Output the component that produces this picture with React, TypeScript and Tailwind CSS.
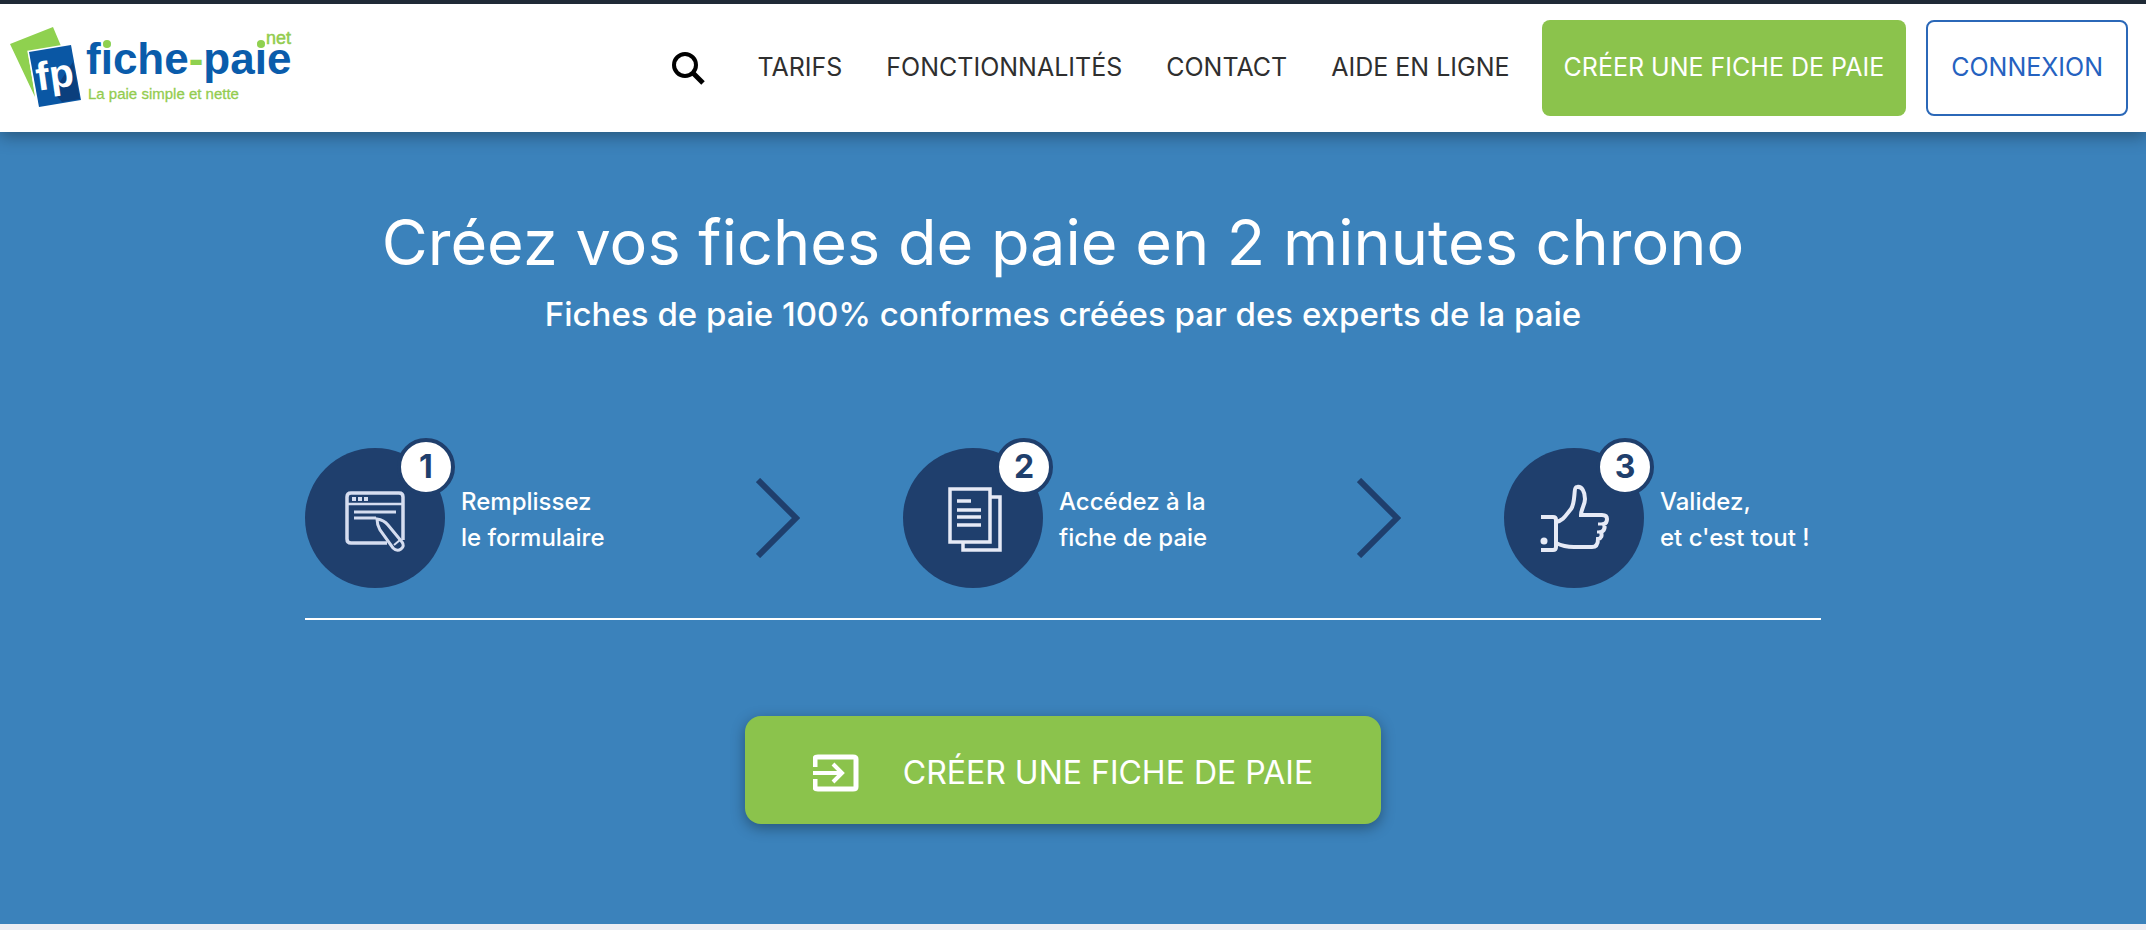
const links = ["TARIFS", "FONCTIONNALITÉS", "CONTACT", "AIDE EN LIGNE"];

function Logo() {
  return (
    <svg viewBox="0 0 320 128" className="h-32 w-80 shrink-0" role="img" aria-label="fiche-paie.net">
      <path d="M10 40 L53 23 L61 42 L28 48 L35 93 Z" fill="#8fd14f" />
      <path d="M29 48 L71 41 L81 96 L39 103 Z" fill="#0a57a4" stroke="#ffffff" strokeWidth="3" paintOrder="stroke" />
      <path d="M73 58 L80 95 L62 98 L53 88 Z" fill="#0b3f7d" />
      <g fontFamily="'Liberation Sans', Arial, sans-serif">
        <text x="36" y="84" fontSize="40" fontWeight="700" fill="#ffffff" transform="rotate(-8 56 72)">fp</text>
        <text x="86" y="70" fontSize="44" fontWeight="700" fill="#0a5cab">
          fiche<tspan fill="#8fd14f">-</tspan>paie
        </text>
        <circle cx="107" cy="40" r="4" fill="#8fd14f" />
        <circle cx="261" cy="40" r="4" fill="#8fd14f" />
        <text x="266" y="40" fontSize="18" fill="#93cc4f" stroke="#93cc4f" strokeWidth="0.5">net</text>
        <text x="88" y="95" fontSize="15" fill="#93cc4f" stroke="#93cc4f" strokeWidth="0.3">La paie simple et nette</text>
      </g>
    </svg>
  );
}

function SearchIcon() {
  return (
    <svg viewBox="0 0 34 34" className="size-[34px]" fill="none" stroke="#000000">
      <circle cx="14" cy="14" r="11" strokeWidth="4" />
      <path d="M21 21l11 11" strokeWidth="5" />
    </svg>
  );
}

function EnterIcon() {
  return (
    <svg viewBox="0 0 46 38" className="h-[38px] w-[46px]" fill="none" stroke="currentColor" strokeWidth="5">
      <path d="M2 13V5q0-2 3-2h35q3 0 3 2v28q0 2-3 2H5q-3 0-3-2v-8" />
      <path d="M0 19h29M20 10l9 9-9 9" strokeWidth="4" />
    </svg>
  );
}

function FormIcon() {
  return (
    <svg viewBox="0 0 140 140" className="size-full" fill="none" stroke="#d5ddf0" strokeWidth="3.5">
      <path d="M82 95H46q-4 0-4-4V49q0-4 4-4h48q4 0 4 4v43" />
      <path d="M42 56h56" strokeWidth="2.5" />
      <path d="M47 51h4M53 51h4M59 51h4" strokeWidth="4" />
      <path d="M49 64h42M49 70h22" strokeWidth="3" />
      <path d="M72 71q7 1 11 6l14 17q3 4-1 7t-8-1L75 82q-3-5-3-11z" fill="#1f3f6d" strokeWidth="3" />
      <path d="M89 97l6-5" strokeWidth="2" />
    </svg>
  );
}

function PagesIcon() {
  return (
    <svg viewBox="0 0 140 140" className="size-full" fill="none" stroke="#e6eaf6" strokeWidth="3.5">
      <path d="M47 41h40v53H47z" />
      <path d="M88 49h9v53H60v-7" />
      <path d="M54 53h14M54 62h24M54 69h24M54 77h24" strokeWidth="3.5" />
    </svg>
  );
}

function ThumbIcon() {
  return (
    <svg viewBox="0 0 140 140" className="size-full" fill="none" stroke="#e6eaf6" strokeWidth="4">
      <path d="M37 69h12q3 0 3 3v27q0 3-3 3H37" />
      <path d="M52 74c7-1 10-7 15-13 5-7 2-22 6-22 5-1 8 5 8 12 0 6-4 10-4 16h21q5 0 5 4t-3 5q2 6-3 8 2 6-3 7 0 8-6 8H70q-10 0-18-4" />
      <path d="M94 76h6M93 84h5M92 91h4" strokeWidth="3" />
      <circle cx="40" cy="93" r="3.5" fill="#e6eaf6" stroke="none" />
    </svg>
  );
}

function Chevron() {
  return (
    <svg viewBox="0 0 44 80" className="h-20 w-11" fill="none" stroke="#1f3f6d" strokeWidth="6">
      <path d="M2 2l38 38L2 78" />
    </svg>
  );
}

function Step({ n, icon, lines }: { n: number; icon: React.ReactNode; lines: string[] }) {
  return (
    <li className="flex items-center gap-4">
      <div className="relative size-[140px] shrink-0 rounded-full bg-[#1f3f6d]">
        {icon}
        <span className="absolute -top-[10px] -right-[10px] flex size-[58px] items-center justify-center rounded-full border-4 border-[#1f3f6d] bg-white text-[32px] font-bold text-[#1f3f6d]">
          {n}
        </span>
      </div>
      <p className="pt-1 text-2xl leading-9 font-medium whitespace-nowrap">
        {lines[0]}
        <br />
        {lines[1]}
      </p>
    </li>
  );
}

export default function App() {
  return (
    <div className="bg-[#eeeef3] pb-[6px] font-['Inter',sans-serif]">
      {/* HEADER */}
      <header className="relative flex h-[132px] items-center justify-between border-t-4 border-[#1f2a36] bg-white pr-[18px] shadow-[0_4px_16px_rgba(0,0,0,0.35)]">
        <a href="#">
          <Logo />
        </a>

        <div className="flex items-center text-[25px]">
          <button aria-label="Rechercher" className="mr-[52px]">
            <SearchIcon />
          </button>
          <nav className="mr-8 flex gap-11 text-[#2f2f2f]">
            {links.map((l) => (
              <a key={l} href="#">{l}</a>
            ))}
          </nav>
          <a href="#" className="mr-5 flex h-24 items-center rounded-lg bg-[#8bc34c] px-[22px] text-white">
            CRÉER UNE FICHE DE PAIE
          </a>
          <a href="#" className="flex h-24 items-center rounded-lg border-2 border-[#2b68b8] px-[23px] text-[#2562c0]">
            CONNEXION
          </a>
        </div>
      </header>

      {/* HERO */}
      <main className="flex h-[792px] flex-col items-center bg-[#3b82bb] pr-5 text-white">
        <h1 className="mt-[70px] text-[63px] leading-[80px]">Créez vos fiches de paie en 2 minutes chrono</h1>
        <p className="mt-2 text-[33px] leading-[48px] font-medium">
          Fiches de paie 100% conformes créées par des experts de la paie
        </p>

        {/* STEPS */}
        <ol className="mt-[110px] grid w-full max-w-[1516px] grid-cols-[451fr_147fr_454fr_147fr_317fr] items-center border-b-2 border-white pb-[30px]">
          <Step n={1} icon={<FormIcon />} lines={["Remplissez", "le formulaire"]} />
          <li aria-hidden="true"><Chevron /></li>
          <Step n={2} icon={<PagesIcon />} lines={["Accédez à la", "fiche de paie"]} />
          <li aria-hidden="true"><Chevron /></li>
          <Step n={3} icon={<ThumbIcon />} lines={["Validez,", "et c'est tout !"]} />
        </ol>

        <a href="#" className="mt-24 flex h-[108px] items-center gap-11 rounded-2xl bg-[#8bc34c] px-[68px] pt-1.5 text-[32px] shadow-[0_4px_14px_rgba(0,0,0,0.35)]">
          <EnterIcon />
          CRÉER UNE FICHE DE PAIE
        </a>
      </main>
    </div>
  );
}
